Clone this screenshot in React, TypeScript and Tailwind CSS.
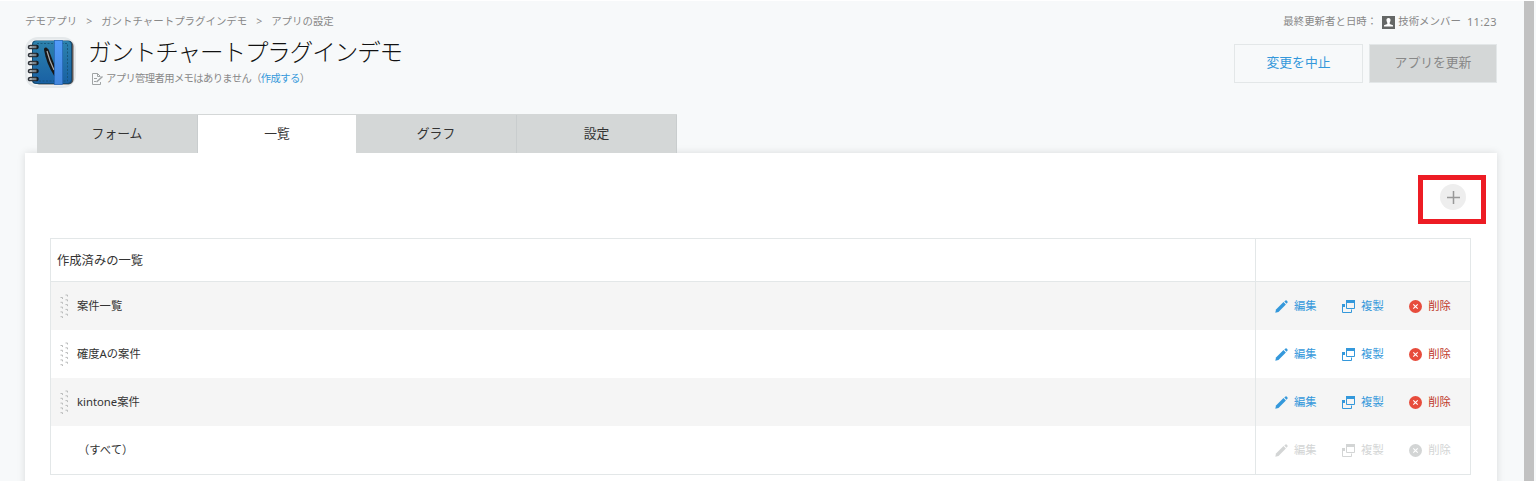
import type { ReactNode } from "react";

interface ViewItem {
  name: string;
  locked?: boolean;
}

const tabs = ["フォーム", "一覧", "グラフ", "設定"];

const views: ViewItem[] = [
  { name: "案件一覧" },
  { name: "確度Aの案件" },
  { name: "kintone案件" },
  { name: "（すべて）", locked: true },
];

function AppIcon() {
  return (
    <svg className="h-[52px] w-[52px] shrink-0" viewBox="0 0 52 52">
      <defs>
        <linearGradient id="cover" x1="0" y1="0" x2="0" y2="1">
          <stop offset="0" stopColor="#2d82ad" />
          <stop offset="1" stopColor="#1961a4" />
        </linearGradient>
        <linearGradient id="band" x1="0" y1="0" x2="0" y2="1">
          <stop offset="0" stopColor="#529bfa" />
          <stop offset="1" stopColor="#4386dc" />
        </linearGradient>
      </defs>
      <rect x="0" y="0" width="51" height="51" rx="13" fill="#e4e8ea" />
      <rect x="2.500" y="2.500" width="46" height="46" rx="10" fill="#f4f6f7" />
      <rect x="9" y="4" width="39.500" height="43.500" rx="5" fill="#5d5756" />
      <rect x="7" y="3.500" width="40" height="43.500" rx="4" fill="#154b71" />
      <rect x="8" y="4" width="38" height="42" rx="4" fill="url(#cover)" />
      <path d="M12 6.500H42.500V44H12" fill="none" stroke="#155071" strokeWidth="0.800" strokeDasharray="2 1.500" />
      <path d="M19 12.500C19 10 21.500 9.500 23.500 12.500L31 32V40L29 38.500C24 31 20.500 22 19 12.500Z" fill="#171717" />
      <path d="M22 14C23.500 20 25.500 26 29 33" fill="none" stroke="#a7a9aa" strokeWidth="1.200" />
      <rect x="29.500" y="3.500" width="8" height="44" fill="url(#band)" stroke="#2766b5" strokeWidth="0.700" />
      {[10, 18, 26, 34, 42].map((y) => (
        <g key={y}>
          <circle cx="11.500" cy={y} r="2.300" fill="#151c22" />
          <path
            d={`M11.500 ${y - 1.5}H5.500Q3.500 ${y - 1.5} 3.500 ${y + 0.2}Q3.500 ${y + 1.8} 5.500 ${y + 1.5}H11.500`}
            fill="none"
            stroke="#30343a"
            strokeWidth="1.500"
          />
          <path d={`M5.500 ${y}H11.500`} stroke="#9a9ea1" strokeWidth="1.500" />
        </g>
      ))}
    </svg>
  );
}

function MemoIcon() {
  return (
    <svg className="mr-[3px] h-3 w-[11px] shrink-0" viewBox="0 0 11 12" fill="none" stroke="#a0a4a5" strokeWidth="1">
      <path d="M8.500 9V11.500H0.500V0.500H5.500L8.500 3.500M5.500 0.500V3.500H8" />
      <path d="M2 5.500H5M2 8.500H4" />
      <path d="M4.500 9L10.500 3.500" strokeWidth="1.500" />
    </svg>
  );
}

function PersonIcon() {
  return (
    <svg className="mr-[3px] ml-[5px] h-[13px] w-[13px]" viewBox="0 0 13 13">
      <rect width="13" height="13" fill="#646766" />
      <path d="M6.500 2C8 2 8.700 3 8.500 4.500C8.400 5.600 7.800 6 7.700 7V8L11 9.200V10.500H2V9.200L5.300 8V7C5.200 6 4.600 5.600 4.500 4.500C4.300 3 5 2 6.500 2Z" fill="#fff" />
    </svg>
  );
}

function PencilIcon() {
  return (
    <svg className="h-[13px] w-[13px]" viewBox="0 0 13 13" fill="currentColor">
      <path d="M0.300 12.700L1 9.500L8.500 2.100L10.900 4.500L3.500 12Z" />
      <path d="M9.300 1.500L10.500 0.500Q11.200 0 12.200 0.900Q13 1.900 12.500 2.600L11.500 3.800Z" />
    </svg>
  );
}

function CopyIcon() {
  return (
    <svg className="h-[13px] w-[13px]" viewBox="0 0 13 13">
      <path d="M3 4.500H0.500V12.500H9.500V9.500" fill="none" stroke="currentColor" />
      <path d="M0 4H3V7H0Z" fill="currentColor" />
      <path d="M4.500 1V8.500H12.500V1" fill="none" stroke="currentColor" />
      <path d="M4 0H13V3H4Z" fill="currentColor" />
    </svg>
  );
}

function DeleteIcon() {
  return (
    <svg className="h-[13px] w-[13px]" viewBox="0 0 13 13">
      <circle cx="6.500" cy="6.500" r="6.500" fill="currentColor" />
      <path d="M4.300 4.300L8.700 8.700M8.700 4.300L4.300 8.700" stroke="#fff" strokeWidth="1.100" />
    </svg>
  );
}

function DragHandle() {
  return (
    <svg className="h-6 w-[9px]" viewBox="0 0 9 24" fill="none" stroke="#b9bbbb" strokeWidth="1">
      {[0, 1, 2, 3, 4].map((i) => (
        <g key={i}>
          <path d={`M5.500 ${1 + i * 4.8}H7.500V${2.5 + i * 4.8}`} />
          <path d={`M0.500 ${3.5 + i * 4.8}H2.500V${5 + i * 4.8}`} />
        </g>
      ))}
    </svg>
  );
}

function Action({ icon, label, iconColor, textColor }: { icon: ReactNode; label: string; iconColor: string; textColor: string }) {
  return (
    <button className="flex items-center gap-1.5">
      <span className={`mt-px ${iconColor}`}>{icon}</span>
      <span className={`text-[11.300px] leading-4 whitespace-nowrap ${textColor}`}>{label}</span>
    </button>
  );
}

function ViewRow({ view, striped }: { view: ViewItem; striped: boolean }) {
  const blue = view.locked ? "text-[#d3d5d5]" : "text-[#3498db]";
  return (
    <div className={`flex h-12 ${striped ? "bg-[#f5f5f5]" : "bg-white"}`}>
      <div className="flex flex-1 items-center pl-[9px]">
        {!view.locked && <DragHandle />}
        <span className={`text-[11.300px] leading-4 ${view.locked ? "ml-[18px]" : "ml-2"}`}>{view.name}</span>
      </div>
      <div className="flex w-[215px] items-center gap-[25.500px] border-l border-[#e3e7e8] pl-[19px]">
        <Action icon={<PencilIcon />} label="編集" iconColor={blue} textColor={blue} />
        <Action icon={<CopyIcon />} label="複製" iconColor={blue} textColor={blue} />
        <Action
          icon={<DeleteIcon />}
          label="削除"
          iconColor={view.locked ? "text-[#d3d5d5]" : "text-[#e74c3c]"}
          textColor={view.locked ? "text-[#d3d5d5]" : "text-[#c0392b]"}
        />
      </div>
    </div>
  );
}

export default function App() {
  return (
    <div className="flex h-[481px] overflow-hidden border-t border-white bg-[#f7f9fa] font-['Noto_Sans','Noto_Sans_CJK_JP',sans-serif] text-[#333]">
      <main className="flex flex-1 flex-col pr-[27px] pl-[25px]">
        <header className="flex h-[113px] shrink-0 justify-between pt-[13px]">
          <div>
            <nav className="flex h-4 items-center gap-[9px] text-[10.450px] text-[#888]">
              <span>デモアプリ</span>
              <span>&gt;</span>
              <span>ガントチャートプラグインデモ</span>
              <span>&gt;</span>
              <span>アプリの設定</span>
            </nav>
            <div className="mt-[7px] flex">
              <AppIcon />
              <div className="ml-[11px]">
                <h1 className="h-8 text-[23.500px] leading-[30px] font-light tracking-[-1.050px] whitespace-nowrap text-[#111]">ガントチャートプラグインデモ</h1>
                <p className="mt-[2px] ml-1 flex h-4 items-center text-[10.300px] tracking-[-0.600px] whitespace-nowrap text-[#888]">
                  <MemoIcon />
                  <span>アプリ管理者用メモはありません（</span>
                  <a className="text-[#3498db]">作成する</a>
                  <span>）</span>
                </p>
              </div>
            </div>
          </div>
          <div className="flex flex-col items-end">
            <div className="flex h-4 items-center text-[10.450px] text-[#888]">
              <span>最終更新者と日時：</span>
              <PersonIcon />
              <span>技術メンバー</span>
              <span className="ml-1.5 text-[11px] leading-[14px] tracking-[0.400px]">11:23</span>
            </div>
            <div className="mt-[14px] flex gap-1.5">
              <button className="h-[39px] w-[129px] border border-[#e3e7e8] pb-0.5 text-[12.800px] text-[#3498db]">変更を中止</button>
              <button className="h-[39px] w-[128px] border border-[#e3e7e8] bg-[#d4d7d7] pb-0.5 text-[12.800px] text-[#888]">アプリを更新</button>
            </div>
          </div>
        </header>

        <div className="relative z-10 ml-3 grid h-[39px] w-[640px] shrink-0 grid-cols-[161px_158px_161px_160px] border-t border-[#d4d7d7]">
          {tabs.map((tab) => (
            <button
              key={tab}
              className={`text-[12.800px] ${tab === "一覧" ? "bg-white" : "border-r border-[#c9cdce] bg-[#d4d7d7]"}`}
            >
              {tab}
            </button>
          ))}
        </div>

        <section className="relative h-[340px] shrink-0 bg-white pt-[85px] pr-[26px] pl-[25px] shadow-[0_0_8px_rgba(0,0,0,0.12)]">
          <button className="absolute top-[31px] right-[31px] flex h-[26px] w-[26px] items-center justify-center rounded-full bg-[#eee]">
            <svg className="h-[13px] w-[13px]" viewBox="0 0 13 13" stroke="#999" strokeWidth="1.500">
              <path d="M6.500 0V13M0 6.500H13" />
            </svg>
          </button>
          <div className="absolute top-[22px] right-[11px] h-[49px] w-[68px] border-[5px] border-[#ed1c24]" />

          <div className="border border-[#e3e7e8]">
            <div className="flex h-[43px] border-b border-[#e3e7e8]">
              <div className="flex flex-1 items-center pt-0.5 pl-1.5 text-[12.300px]">作成済みの一覧</div>
              <div className="w-[215px] border-l border-[#e3e7e8]" />
            </div>
            {views.map((view, i) => (
              <ViewRow key={view.name} view={view} striped={i % 2 === 0} />
            ))}
          </div>
        </section>
      </main>
      <div className="mr-0.5 w-2.5 bg-[#c1c1c1]" />
    </div>
  );
}
